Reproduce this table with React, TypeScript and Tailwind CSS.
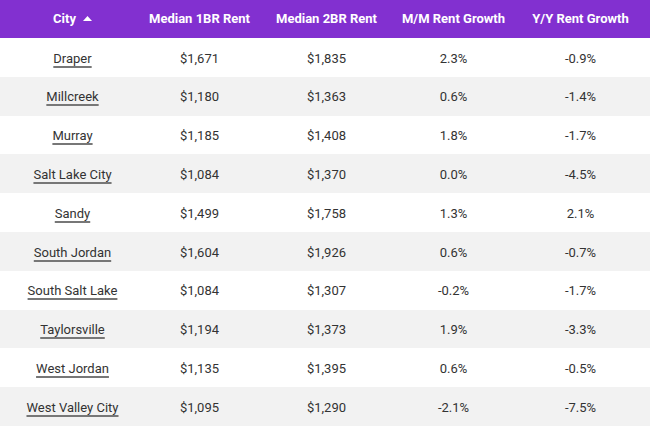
import React from "react";

const rows: [string, string, string, string, string][] = [
  ["Draper", "$1,671", "$1,835", "2.3%", "-0.9%"],
  ["Millcreek", "$1,180", "$1,363", "0.6%", "-1.4%"],
  ["Murray", "$1,185", "$1,408", "1.8%", "-1.7%"],
  ["Salt Lake City", "$1,084", "$1,370", "0.0%", "-4.5%"],
  ["Sandy", "$1,499", "$1,758", "1.3%", "2.1%"],
  ["South Jordan", "$1,604", "$1,926", "0.6%", "-0.7%"],
  ["South Salt Lake", "$1,084", "$1,307", "-0.2%", "-1.7%"],
  ["Taylorsville", "$1,194", "$1,373", "1.9%", "-3.3%"],
  ["West Jordan", "$1,135", "$1,395", "0.6%", "-0.5%"],
  ["West Valley City", "$1,095", "$1,290", "-2.1%", "-7.5%"],
];

export default function App() {
  return (
    <div
      className="w-[650px] h-[428px] bg-white overflow-hidden"
      style={{ fontFamily: "Roboto, 'Liberation Sans', sans-serif" }}
    >
      <div className="h-[38px] bg-[#8230d0] pl-[9px] pr-[6px] grid grid-cols-5 items-center text-white font-bold text-[13px]">
        <div className="flex items-center justify-center gap-[7px]">
          <span>City</span>
          <svg width="9" height="5" viewBox="0 0 9 5" className="mb-[1px]">
            <polygon points="0,5 4.5,0 9,5" fill="white" />
          </svg>
        </div>
        <div className="text-center">Median 1BR Rent</div>
        <div className="text-center">Median 2BR Rent</div>
        <div className="text-center">M/M Rent Growth</div>
        <div className="text-center">Y/Y Rent Growth</div>
      </div>
      {rows.map((r, i) => (
        <div
          key={r[0]}
          className={`h-[38.8px] pl-[9px] pr-[6px] pt-[2px] grid grid-cols-5 items-center text-[13px] text-[#333] ${
            i % 2 === 1 ? "bg-[#f2f2f2]" : "bg-white"
          }`}
        >
          <div className="text-center">
            <span className="underline decoration-[#777] decoration-[1.5px] underline-offset-[3px]">
              {r[0]}
            </span>
          </div>
          <div className="text-center">{r[1]}</div>
          <div className="text-center">{r[2]}</div>
          <div className="text-center">{r[3]}</div>
          <div className="text-center">{r[4]}</div>
        </div>
      ))}
    </div>
  );
}
